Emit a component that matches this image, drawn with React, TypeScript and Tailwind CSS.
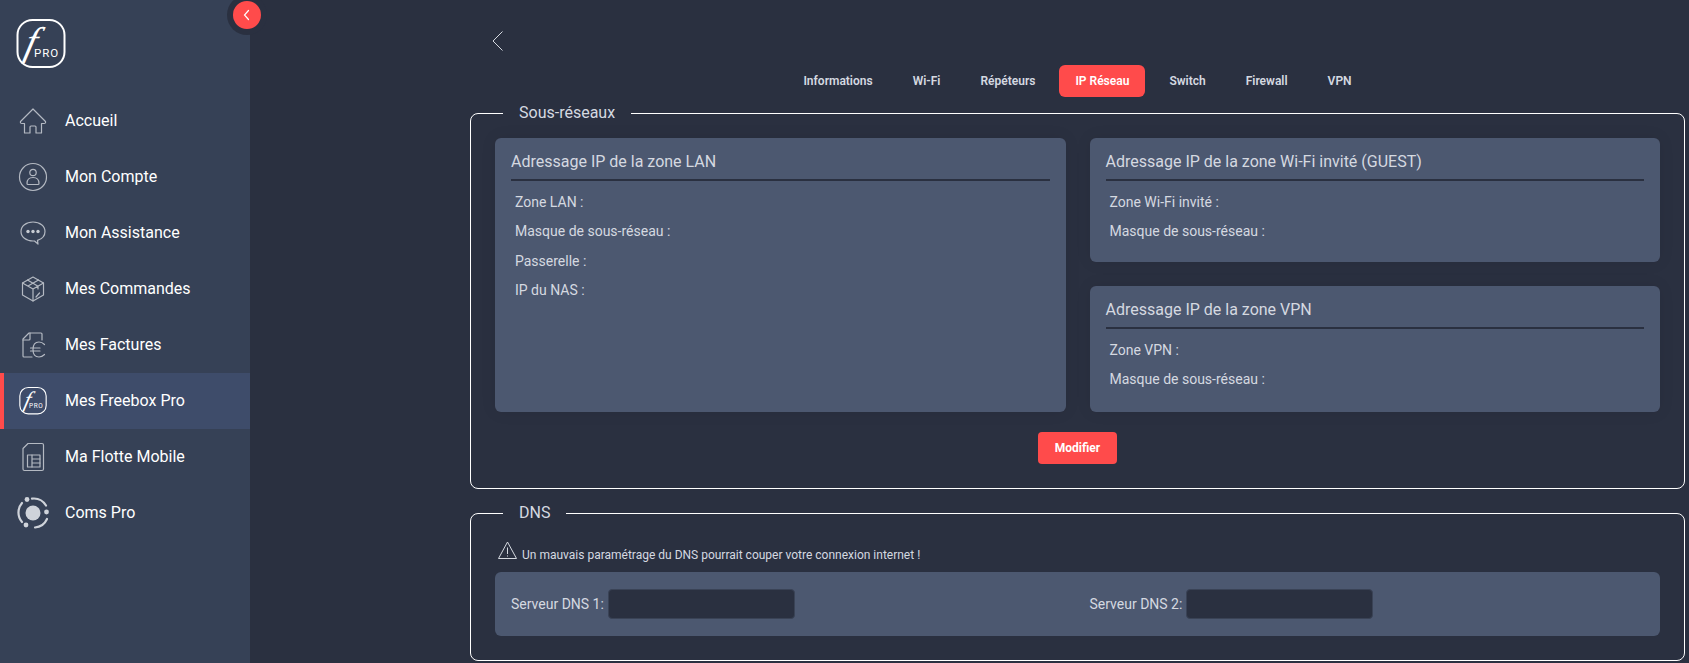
const font = { fontFamily: "Roboto, sans-serif" };

function FLogo({ size, stroke = 2 }: { size: number; stroke?: number }) {
  return (
    <svg width={size} height={size} viewBox="0 0 50 50" fill="none">
      <rect x="1.5" y="1" width="47" height="47" rx="15" stroke="white" strokeWidth={stroke} />
      <text transform="translate(7 36) skewX(-14)" fill="white" fontSize="40" fontStyle="italic" fontFamily="Liberation Serif, serif">f</text>
      <text x="18" y="38" fill="white" fontSize="11.5" letterSpacing="1" fontFamily="Roboto, sans-serif">PRO</text>
    </svg>
  );
}

const iconProps = { fill: "none", stroke: "#b4b9c2", strokeWidth: 1.2, strokeLinecap: "round", strokeLinejoin: "round" } as const;

function HomeIcon() {
  return (
    <svg width="30" height="30" viewBox="0 0 30 30" {...iconProps}>
      <path d="M15 3 L2.5 15.5 Q2 17.5 4 17.5 H6.5 V27 H12 V21 Q12 20 13 20 H17 Q18 20 18 21 V27 H23.5 V17.5 H26 Q28 17.5 27.5 15.5 Z" />
    </svg>
  );
}
function UserIcon() {
  return (
    <svg width="30" height="30" viewBox="0 0 30 30" {...iconProps}>
      <circle cx="15" cy="15" r="13.5" />
      <circle cx="15" cy="10.5" r="3.2" />
      <path d="M9 21.5 Q9 15.5 15 15.5 Q21 15.5 21 21.5 Q21 22.5 20 22.5 H10 Q9 22.5 9 21.5 Z" />
    </svg>
  );
}
function ChatIcon() {
  return (
    <svg width="30" height="30" viewBox="0 0 30 30" {...iconProps}>
      <path d="M15 4 C8 4 3 8 3 13.5 C3 19 8 23 15 23 C15.5 23 16 23 16.5 23 L20 26 L19.5 22.3 C24 21 27 17.5 27 13.5 C27 8 22 4 15 4 Z" />
      <circle cx="10" cy="13.5" r="1.7" fill="#c8ccd3" stroke="none" />
      <circle cx="15" cy="13.5" r="1.7" fill="#c8ccd3" stroke="none" />
      <circle cx="20" cy="13.5" r="1.7" fill="#c8ccd3" stroke="none" />
    </svg>
  );
}
function BoxIcon() {
  return (
    <svg width="30" height="30" viewBox="0 0 30 30" {...iconProps}>
      <path d="M15 3 L25.5 9 V21 L15 27 L4.5 21 V9 Z" />
      <path d="M4.5 9 L15 15 L25.5 9 M15 15 V27 M9.5 6 L20 12.2 V15 M20.5 6 L10 12" />
      <path d="M18 23 L21.5 19" />
    </svg>
  );
}
function InvoiceIcon() {
  return (
    <svg width="30" height="30" viewBox="0 0 30 30" {...iconProps}>
      <path d="M24 10 V4 Q24 3 23 3 H11 L5 9 V26 Q5 27 6 27 H14" />
      <path d="M5 10 H11 Q12 10 12 9 V3" />
      <path d="M26.5 14.5 Q24 12 21 12 Q15 12 15 19.5 Q15 27 21 27 Q24 27 26.5 24.5" />
      <path d="M12.5 18 H22 M12.5 21 H22" />
    </svg>
  );
}
function SimIcon() {
  return (
    <svg width="30" height="30" viewBox="0 0 30 30" {...iconProps}>
      <path d="M10 1.5 H24 Q25.5 1.5 25.5 3 V27 Q25.5 28.5 24 28.5 H6.5 Q5 28.5 5 27 V6.5 Z" />
      <rect x="9.5" y="13" width="12.5" height="12" />
      <path d="M14 17 H22 M14 21 H22 M14 13 V25" />
    </svg>
  );
}
function ComsIcon() {
  return (
    <svg width="32" height="32" viewBox="0 0 32 32" fill="none" stroke="#cfd3da" strokeWidth="2.2" strokeLinecap="round">
      <circle cx="16" cy="16" r="7.5" fill="#cfd3da" stroke="none" />
      <circle cx="10" cy="2.5" r="2.4" fill="#cfd3da" stroke="none" />
      <circle cx="29.5" cy="15" r="2.4" fill="#cfd3da" stroke="none" />
      <circle cx="9" cy="28" r="2.4" fill="#cfd3da" stroke="none" />
      <path d="M15 1.6 A14.5 14.5 0 0 1 29 8.5" />
      <path d="M30 22 A14.5 14.5 0 0 1 18 30.5" />
      <path d="M5 6 A14.5 14.5 0 0 0 5 25" />
    </svg>
  );
}

const navItems = [
  { label: "Accueil", icon: <HomeIcon /> },
  { label: "Mon Compte", icon: <UserIcon /> },
  { label: "Mon Assistance", icon: <ChatIcon /> },
  { label: "Mes Commandes", icon: <BoxIcon /> },
  { label: "Mes Factures", icon: <InvoiceIcon /> },
  { label: "Mes Freebox Pro", icon: <FLogo size={28} stroke={2} />, active: true },
  { label: "Ma Flotte Mobile", icon: <SimIcon /> },
  { label: "Coms Pro", icon: <ComsIcon /> },
];

const tabs = ["Informations", "Wi-Fi", "Répéteurs", "IP Réseau", "Switch", "Firewall", "VPN"];

function ZoneCard({ title, rows, className }: { title: string; rows: string[]; className: string }) {
  return (
    <div className={`bg-[#4c5870] rounded-md px-4 pt-[12px] shadow-[0_0_16px_rgba(0,0,0,0.08)] ${className}`}>
      <div className="text-[16px] leading-6 text-[#d5d9e0] pb-[5px] border-b-2 border-[#2a3040]">{title}</div>
      <div className="pl-1 pt-[7px]">
        {rows.map(r => (
          <div key={r} className="h-[29.4px] leading-[29px] text-[14px] text-[#d5d9e0]">{r}</div>
        ))}
      </div>
    </div>
  );
}

function Panel({ title, children, className }: { title: string; children: React.ReactNode; className: string }) {
  return (
    <fieldset className={`border border-white rounded-lg min-w-0 ${className}`}>
      <legend className="ml-2 px-4 text-[16px] leading-6 text-[#d5d9e0]">{title}</legend>
      {children}
    </fieldset>
  );
}

export default function App() {
  return (
    <div className="flex h-[663px] overflow-hidden bg-[#2a3040]" style={font}>
      <aside className="relative w-[250px] shrink-0 bg-[#364156]">
        <div className="absolute -right-[17px] -top-[5px] w-10 h-10 rounded-full bg-[#2a3040] flex items-center justify-center">
          <div className="w-7 h-7 rounded-full bg-[#ff4b4b] flex items-center justify-center">
            <svg width="10" height="12" viewBox="0 0 10 12" fill="none" stroke="white" strokeWidth="1.2" strokeLinecap="round">
              <path d="M6.5 1.5 L2.5 6 L6.5 10.5" />
            </svg>
          </div>
        </div>
        <div className="pl-4 pt-[19px] h-[93px]">
          <FLogo size={50} />
        </div>
        <nav>
          {navItems.map(item => (
            <div
              key={item.label}
              className={`h-14 flex items-center border-l-4 ${item.active ? "bg-[#3e4c6a] border-[#ff4b4b]" : "border-transparent"}`}
            >
              <div className="w-[61px] flex justify-center pr-[3px]">{item.icon}</div>
              <span className="text-[16px] font-[450] text-white">{item.label}</span>
            </div>
          ))}
        </nav>
      </aside>

      <main className="flex-1 pl-[220px] pr-1">
        <div className="h-[65px] pl-[22px] pt-[31px]">
          <svg width="11" height="20" viewBox="0 0 11 20" fill="none" stroke="#d5d9e0" strokeWidth="1">
            <path d="M10.5 0.5 L1 10 L10.5 19.5" />
          </svg>
        </div>
        <div className="flex justify-center gap-2">
          {tabs.map(t => (
            <div
              key={t}
              className={`h-8 px-4 flex items-center rounded-md text-[12px] font-semibold ${t === "IP Réseau" ? "bg-[#ff4b4b] text-white" : "text-[#d5d9e0]"}`}
            >
              {t}
            </div>
          ))}
        </div>
        <Panel title="Sous-réseaux" className="mt-1 px-6 pt-[13px] pb-6">
          <div className="grid grid-cols-2 gap-6">
            <ZoneCard
              title="Adressage IP de la zone LAN"
              rows={["Zone LAN :", "Masque de sous-réseau :", "Passerelle :", "IP du NAS :"]}
              className="h-[274px]"
            />
            <div className="flex flex-col gap-6">
              <ZoneCard
                title="Adressage IP de la zone Wi-Fi invité (GUEST)"
                rows={["Zone Wi-Fi invité :", "Masque de sous-réseau :"]}
                className="h-[124px]"
              />
              <ZoneCard
                title="Adressage IP de la zone VPN"
                rows={["Zone VPN :", "Masque de sous-réseau :"]}
                className="h-[126px]"
              />
            </div>
          </div>
          <div className="flex justify-center mt-5">
            <button className="w-[79px] h-8 rounded bg-[#ff4b4b] text-white text-[12px] font-bold">Modifier</button>
          </div>
        </Panel>
        <Panel title="DNS" className="mt-[12px] px-6 pb-[24px]">
          <div className="flex items-start pt-4 pl-[3px] text-[12px] text-[#d5d9e0] gap-[5px]">
            <svg width="19" height="19" viewBox="0 0 19 19" fill="none" stroke="#d5d9e0" strokeWidth="1" strokeLinejoin="round">
              <path d="M9.5 1 L18.5 17.5 H0.5 Z" />
              <path d="M9.5 6.5 V13 M9.5 14.5 V15.5" />
            </svg>
            <span className="mt-[5px]">Un mauvais paramétrage du DNS pourrait couper votre connexion internet !</span>
          </div>
          <div className="mt-[8px] h-[64px] bg-[#4c5870] rounded-md px-4 grid grid-cols-2 gap-6 items-center">
            {["Serveur DNS 1:", "Serveur DNS 2:"].map(l => (
              <label key={l} className="flex items-center gap-1 text-[14px] text-[#d5d9e0]">
                {l}
                <input className="w-[187px] h-[30px] rounded bg-[#2a3040] border border-[#3a4356]" />
              </label>
            ))}
          </div>
        </Panel>
      </main>
    </div>
  );
}
